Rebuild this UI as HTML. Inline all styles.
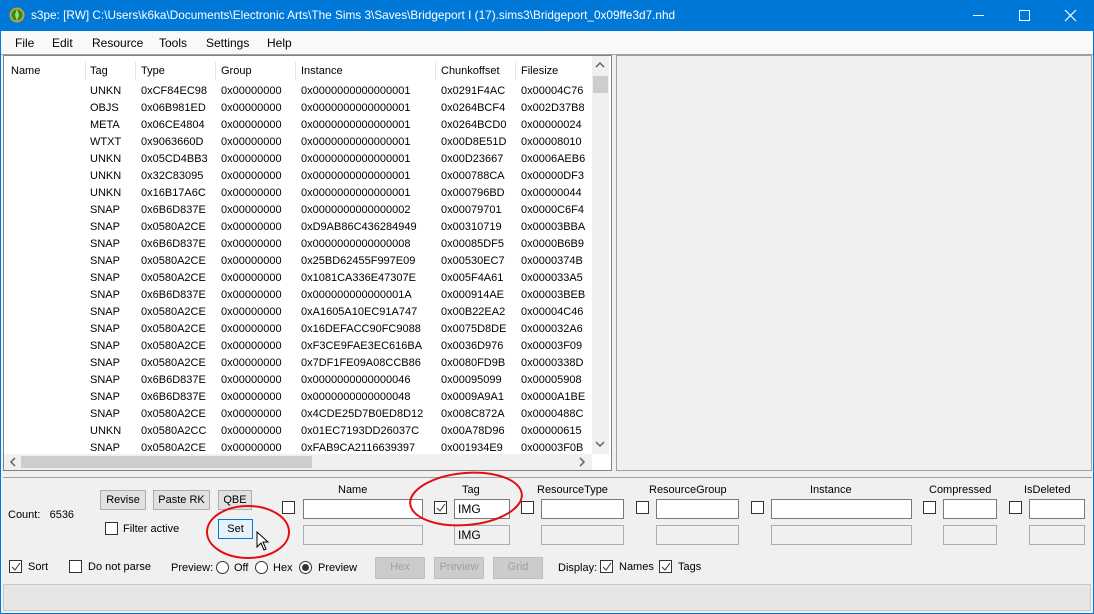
<!DOCTYPE html>
<html><head><meta charset="utf-8"><style>
*{box-sizing:border-box;margin:0;padding:0}
body{width:1094px;height:614px;overflow:hidden;background:#f0f0f0;font-family:"Liberation Sans",sans-serif;font-size:11px;color:#000;position:relative}
.a{position:absolute;white-space:nowrap}
.tb{left:0;top:0;width:1094px;height:31px;background:#0078d7;color:#fff;font-size:11.8px}
.menu{left:1px;top:31px;width:1092px;height:23px;background:#f9f9f9;font-size:12px}
.list{left:3px;top:55px;width:609px;height:416px;background:#fff;border:1px solid #828282}
.hd{color:#000}
.sep{width:1px;height:18px;background:#e5e5e5;top:6px}
.cb{width:13px;height:13px;border:1px solid #333;background:#fff}
.tx{height:20px;border:1px solid #7a7a7a;background:#fff;font-size:12px;padding:2px 3px}
.tx2{height:20px;border:1px solid #adadad;background:#f0f0f0;font-size:12px;padding:2px 3px}
.btn{height:20px;border:1px solid #adadad;background:#e1e1e1;text-align:center;line-height:18px;font-size:11px}
.dis{color:#a0a0a0;background:#cccccc;border-color:#bfbfbf}
.rb{width:13px;height:13px;border:1px solid #333;border-radius:50%;background:#fff}
</style></head><body>
<div class="a tb">
<svg class="a" style="left:9px;top:7px" width="16" height="16"><circle cx="8" cy="8" r="7.5" fill="#c8a030"/><circle cx="8" cy="8" r="5.5" fill="#2e8b2e"/><path d="M8 2 L10 8 L8 14 L6 8Z" fill="#9fe070"/></svg>
<div class="a" style="left:31px;top:8px">s3pe: [RW] C:\Users\k6ka\Documents\Electronic Arts\The Sims 3\Saves\Bridgeport I (17).sims3\Bridgeport_0x09ffe3d7.nhd</div>
<div class="a" style="left:973px;top:15px;width:11px;height:1px;background:#fff"></div>
<div class="a" style="left:1019px;top:10px;width:11px;height:11px;border:1px solid #fff"></div>
<svg class="a" style="left:1064px;top:9px" width="13" height="13"><path d="M1 1L12 12M12 1L1 12" stroke="#fff" stroke-width="1.2"/></svg>
</div>
<div class="a menu">
<span class="a" style="left:14px;top:5px">File</span><span class="a" style="left:51px;top:5px">Edit</span><span class="a" style="left:91px;top:5px">Resource</span><span class="a" style="left:158px;top:5px">Tools</span><span class="a" style="left:205px;top:5px">Settings</span><span class="a" style="left:266px;top:5px">Help</span>
</div>
<div class="a" style="left:0;top:54px;width:1094px;height:1px;background:#a0a0a0"></div>
<div class="a list">
<div class="a hd" style="left:7px;top:9px">Name</div><div class="a sep" style="left:81px"></div>
<div class="a hd" style="left:86px;top:9px">Tag</div><div class="a sep" style="left:131px"></div>
<div class="a hd" style="left:137px;top:9px">Type</div><div class="a sep" style="left:211px"></div>
<div class="a hd" style="left:217px;top:9px">Group</div><div class="a sep" style="left:291px"></div>
<div class="a hd" style="left:297px;top:9px">Instance</div><div class="a sep" style="left:431px"></div>
<div class="a hd" style="left:437px;top:9px">Chunkoffset</div><div class="a sep" style="left:511px"></div>
<div class="a hd" style="left:517px;top:9px">Filesize</div>
<div id="rows"></div>
<div class="a" style="left:588px;top:0;width:17px;height:398px;background:#f0f0f0"></div>
<svg class="a" style="left:591px;top:5px" width="10" height="8"><path d="M1 6L5 2L9 6" stroke="#606060" fill="none" stroke-width="1.5"/></svg>
<div class="a" style="left:589px;top:20px;width:15px;height:17px;background:#cdcdcd"></div>
<svg class="a" style="left:591px;top:384px" width="10" height="8"><path d="M1 2L5 6L9 2" stroke="#606060" fill="none" stroke-width="1.5"/></svg>
<div class="a" style="left:0;top:398px;width:588px;height:16px;background:#f0f0f0"></div>
<div class="a" style="left:17px;top:400px;width:291px;height:12px;background:#cdcdcd"></div>
<svg class="a" style="left:5px;top:401px" width="8" height="10"><path d="M6 1L2 5L6 9" stroke="#606060" fill="none" stroke-width="1.5"/></svg>
<svg class="a" style="left:574px;top:401px" width="8" height="10"><path d="M2 1L6 5L2 9" stroke="#606060" fill="none" stroke-width="1.5"/></svg>
</div>
<div class="a" style="left:616px;top:55px;width:476px;height:416px;border:1px solid #a0a0a0;background:#f0f0f0"></div>
<div class="a" style="left:3px;top:477px;width:1089px;height:1px;background:#a0a0a0"></div>
<div class="a" style="left:8px;top:509px">Count:&nbsp;&nbsp;&nbsp;6536</div>
<div class="a btn" style="left:100px;top:490px;width:46px">Revise</div>
<div class="a btn" style="left:153px;top:490px;width:57px">Paste RK</div>
<div class="a btn" style="left:218px;top:490px;width:34px">QBE</div>
<div class="a cb" style="left:105px;top:522px"></div><div class="a" style="left:123px;top:523px">Filter active</div>
<div class="a btn" style="left:218px;top:519px;width:35px;background:#e5f1fb;border-color:#0078d7">Set</div>
<svg class="a" style="left:256px;top:531px" width="16" height="22"><path d="M1 1V16L5 12L8 19L10 18L7 11H12Z" fill="#fff" stroke="#000"/></svg>
<div class="a" style="left:338px;top:484px">Name</div>
<div class="a" style="left:462px;top:484px">Tag</div>
<div class="a" style="left:537px;top:484px">ResourceType</div>
<div class="a" style="left:649px;top:484px">ResourceGroup</div>
<div class="a" style="left:810px;top:484px">Instance</div>
<div class="a" style="left:929px;top:484px">Compressed</div>
<div class="a" style="left:1024px;top:484px">IsDeleted</div>
<div class="a cb" style="left:282px;top:501px"></div>
<div class="a tx" style="left:303px;top:499px;width:120px"></div>
<div class="a tx2" style="left:303px;top:525px;width:120px"></div>
<div class="a cb" style="left:434px;top:501px"></div>
<svg class="a" style="left:436px;top:503px" width="10" height="10"><path d="M1 5L4 8L9 1" stroke="#333" fill="none"/></svg>
<div class="a tx" style="left:454px;top:499px;width:56px">IMG</div>
<div class="a tx2" style="left:454px;top:525px;width:56px">IMG</div>
<div class="a cb" style="left:521px;top:501px"></div>
<div class="a tx" style="left:541px;top:499px;width:83px"></div>
<div class="a tx2" style="left:541px;top:525px;width:83px"></div>
<div class="a cb" style="left:636px;top:501px"></div>
<div class="a tx" style="left:656px;top:499px;width:83px"></div>
<div class="a tx2" style="left:656px;top:525px;width:83px"></div>
<div class="a cb" style="left:751px;top:501px"></div>
<div class="a tx" style="left:771px;top:499px;width:141px"></div>
<div class="a tx2" style="left:771px;top:525px;width:141px"></div>
<div class="a cb" style="left:923px;top:501px"></div>
<div class="a tx" style="left:943px;top:499px;width:54px"></div>
<div class="a tx2" style="left:943px;top:525px;width:54px"></div>
<div class="a cb" style="left:1009px;top:501px"></div>
<div class="a tx" style="left:1029px;top:499px;width:56px"></div>
<div class="a tx2" style="left:1029px;top:525px;width:56px"></div>
<div class="a cb" style="left:9px;top:560px"></div>
<svg class="a" style="left:11px;top:562px" width="10" height="10"><path d="M1 5L4 8L9 1" stroke="#333" fill="none"/></svg>
<div class="a" style="left:28px;top:561px">Sort</div>
<div class="a cb" style="left:69px;top:560px"></div><div class="a" style="left:88px;top:561px">Do not parse</div>
<div class="a" style="left:171px;top:562px">Preview:</div>
<div class="a rb" style="left:216px;top:561px"></div><div class="a" style="left:234px;top:562px">Off</div>
<div class="a rb" style="left:255px;top:561px"></div><div class="a" style="left:273px;top:562px">Hex</div>
<div class="a rb" style="left:299px;top:561px"></div><div class="a" style="left:302px;top:564px;width:7px;height:7px;border-radius:50%;background:#333"></div><div class="a" style="left:318px;top:562px">Preview</div>
<div class="a btn dis" style="left:375px;top:557px;width:50px;height:22px">Hex</div>
<div class="a btn dis" style="left:434px;top:557px;width:50px;height:22px">Preview</div>
<div class="a btn dis" style="left:493px;top:557px;width:50px;height:22px">Grid</div>
<div class="a" style="left:558px;top:562px">Display:</div>
<div class="a cb" style="left:600px;top:560px"></div>
<svg class="a" style="left:602px;top:562px" width="10" height="10"><path d="M1 5L4 8L9 1" stroke="#333" fill="none"/></svg>
<div class="a" style="left:619px;top:561px">Names</div>
<div class="a cb" style="left:659px;top:560px"></div>
<svg class="a" style="left:661px;top:562px" width="10" height="10"><path d="M1 5L4 8L9 1" stroke="#333" fill="none"/></svg>
<div class="a" style="left:678px;top:561px">Tags</div>
<div class="a" style="left:3px;top:584px;width:1088px;height:27px;border:1px solid #c8c8c8;background:#e6e6e6"></div>
<div class="a" style="left:0;top:31px;width:1px;height:583px;background:#0078d7"></div>
<div class="a" style="left:1093px;top:31px;width:1px;height:583px;background:#0078d7"></div>
<div class="a" style="left:0;top:613px;width:1094px;height:1px;background:#0078d7"></div>
<svg class="a" style="left:0;top:0" width="1094" height="614"><ellipse cx="248" cy="532" rx="41" ry="26" fill="none" stroke="#e01010" stroke-width="2"/><ellipse cx="466" cy="499" rx="56" ry="26" transform="rotate(-5 466 499)" fill="none" stroke="#e01010" stroke-width="2"/></svg>
<script>
var d=[["UNKN","0xCF84EC98","0x0000000000000001","0x0291F4AC","0x00004C76"],["OBJS","0x06B981ED","0x0000000000000001","0x0264BCF4","0x002D37B8"],["META","0x06CE4804","0x0000000000000001","0x0264BCD0","0x00000024"],["WTXT","0x9063660D","0x0000000000000001","0x00D8E51D","0x00008010"],["UNKN","0x05CD4BB3","0x0000000000000001","0x00D23667","0x0006AEB6"],["UNKN","0x32C83095","0x0000000000000001","0x000788CA","0x00000DF3"],["UNKN","0x16B17A6C","0x0000000000000001","0x000796BD","0x00000044"],["SNAP","0x6B6D837E","0x0000000000000002","0x00079701","0x0000C6F4"],["SNAP","0x0580A2CE","0xD9AB86C436284949","0x00310719","0x00003BBA"],["SNAP","0x6B6D837E","0x0000000000000008","0x00085DF5","0x0000B6B9"],["SNAP","0x0580A2CE","0x25BD62455F997E09","0x00530EC7","0x0000374B"],["SNAP","0x0580A2CE","0x1081CA336E47307E","0x005F4A61","0x000033A5"],["SNAP","0x6B6D837E","0x000000000000001A","0x000914AE","0x00003BEB"],["SNAP","0x0580A2CE","0xA1605A10EC91A747","0x00B22EA2","0x00004C46"],["SNAP","0x0580A2CE","0x16DEFACC90FC9088","0x0075D8DE","0x000032A6"],["SNAP","0x0580A2CE","0xF3CE9FAE3EC616BA","0x0036D976","0x00003F09"],["SNAP","0x0580A2CE","0x7DF1FE09A08CCB86","0x0080FD9B","0x0000338D"],["SNAP","0x6B6D837E","0x0000000000000046","0x00095099","0x00005908"],["SNAP","0x6B6D837E","0x0000000000000048","0x0009A9A1","0x0000A1BE"],["SNAP","0x0580A2CE","0x4CDE25D7B0ED8D12","0x008C872A","0x0000488C"],["UNKN","0x0580A2CC","0x01EC7193DD26037C","0x00A78D96","0x00000615"],["SNAP","0x0580A2CE","0xFAB9CA2116639397","0x001934E9","0x00003F0B"]];
var h="";d.forEach(function(r,i){var y=29+i*17;h+='<div class="a" style="left:86px;top:'+y+'px">'+r[0]+'</div><div class="a" style="left:137px;top:'+y+'px">'+r[1]+'</div><div class="a" style="left:217px;top:'+y+'px">0x00000000</div><div class="a" style="left:297px;top:'+y+'px">'+r[2]+'</div><div class="a" style="left:437px;top:'+y+'px">'+r[3]+'</div><div class="a" style="left:517px;top:'+y+'px">'+r[4]+'</div>';});
document.getElementById("rows").innerHTML=h;
</script>
</body></html>
